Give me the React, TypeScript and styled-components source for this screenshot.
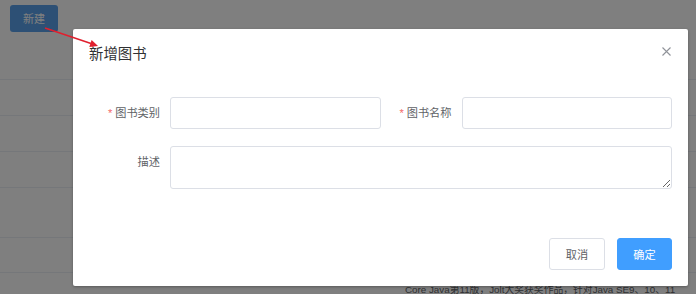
import styled, { createGlobalStyle } from 'styled-components';

const GlobalStyle = createGlobalStyle`
  html, body {
    margin: 0;
    padding: 0;
    background: #fff;
  }
  body {
    font-family: 'Helvetica Neue', Helvetica, 'Noto Sans CJK SC', 'Noto Sans', sans-serif;
    -webkit-font-smoothing: antialiased;
  }
  * {
    box-sizing: border-box;
  }
`;

const Page = styled.div`
  position: relative;
  width: 696px;
  height: 294px;
  overflow: hidden;
  background: #fff;
`;

const Toolbar = styled.div`
  display: flex;
  align-items: center;
  height: 44px;
  padding: 0 10px 8px;
`;

const NewButton = styled.button`
  width: 48px;
  height: 27px;
  border: none;
  border-radius: 3px;
  background: #5aa0ea;
  color: #fff;
  font-family: inherit;
  font-size: 11px;
  padding: 0;
`;

const Table = styled.div`
  display: flex;
  flex-direction: column;
`;

const Row = styled.div<{ $h: number }>`
  display: grid;
  grid-template-columns: 405px 1fr;
  height: ${p => p.$h}px;
  border-bottom: 1px solid #ebeef5;
  align-items: center;
  font-size: 9.8px;
  color: #606266;
`;

const Cell = styled.div`
  white-space: nowrap;
  overflow: hidden;
`;

const Mask = styled.div`
  position: absolute;
  inset: 0;
  background: rgba(0, 0, 0, 0.5);
`;

const Dialog = styled.div`
  position: absolute;
  left: 73px;
  top: 29px;
  width: 615px;
  background: #fff;
  border-radius: 2px;
  box-shadow: 0 1px 3px rgba(0, 0, 0, 0.3);
`;

const Header = styled.div`
  position: relative;
  padding: 16px 16px 8px;
`;

const Title = styled.span`
  font-size: 14.4px;
  line-height: 19.2px;
  color: #303133;
`;

const CloseBtn = styled.button`
  position: absolute;
  top: 16px;
  right: 15px;
  width: 13px;
  height: 13px;
  padding: 0;
  border: none;
  background: transparent;
  display: flex;
  align-items: center;
  justify-content: center;
`;

const Body = styled.div`
  padding: 25px 16px 41px;
  display: flex;
  flex-direction: column;
  gap: 17px;
`;

const FormRow = styled.div`
  display: grid;
  grid-template-columns: 1fr 1fr;
`;

const FormItem = styled.div<{ $full?: boolean }>`
  display: flex;
  align-items: flex-start;
  grid-column: ${p => (p.$full ? '1 / span 2' : 'auto')};
`;

const Label = styled.label`
  flex: 0 0 81px;
  text-align: right;
  padding-right: 10px;
  font-size: 11.2px;
  line-height: 32px;
  color: #606266;
`;

const Star = styled.span`
  color: #f56c6c;
  margin-right: 3px;
`;

const Input = styled.input`
  flex: 1;
  min-width: 0;
  height: 32px;
  border: 1px solid #dcdfe6;
  border-radius: 3px;
  padding: 0 12px;
  font-family: inherit;
  font-size: 11.2px;
  color: #606266;
  outline: none;
  background: #fff;
`;

const TextArea = styled.textarea`
  flex: 1;
  min-width: 0;
  height: 43px;
  border: 1px solid #dcdfe6;
  border-radius: 3px;
  padding: 4px 12px;
  font-family: inherit;
  font-size: 11.2px;
  color: #606266;
  outline: none;
  resize: vertical;
  background: #fff;
  display: block;
`;

const Footer = styled.div`
  display: flex;
  justify-content: flex-end;
  gap: 12px;
  padding: 8px 16px 16px;
`;

const Button = styled.button<{ $primary?: boolean }>`
  height: 32px;
  width: ${p => (p.$primary ? 55 : 56)}px;
  padding: 0;
  border-radius: 3px;
  border: 1px solid ${p => (p.$primary ? '#409eff' : '#dcdfe6')};
  background: ${p => (p.$primary ? '#409eff' : '#fff')};
  color: ${p => (p.$primary ? '#fff' : '#606266')};
  font-family: inherit;
  font-size: 11.2px;
`;

const Arrow = styled.svg`
  position: absolute;
  left: 0;
  top: 0;
  pointer-events: none;
`;

export default function App() {
  const rows = [36, 36, 36, 36, 50, 35];
  return (
    <>
      <GlobalStyle />
      <Page>
        <Toolbar>
          <NewButton>新建</NewButton>
        </Toolbar>
        <Table>
          {rows.map((h, i) => (
            <Row key={i} $h={h}>
              <Cell />
              <Cell />
            </Row>
          ))}
          <Row $h={32}>
            <Cell />
            <Cell>Core Java第11版，Jolt大奖获奖作品，针对Java SE9、10、11</Cell>
          </Row>
        </Table>
        <Mask />
        <Dialog>
          <Header>
            <Title>新增图书</Title>
            <CloseBtn aria-label='close'>
              <svg width={9} height={9} viewBox='0 0 9 9'>
                <path
                  d='M0.5 0.5L8.5 8.5M8.5 0.5L0.5 8.5'
                  stroke='#909399'
                  strokeWidth={1.1}
                />
              </svg>
            </CloseBtn>
          </Header>
          <Body>
            <FormRow>
              <FormItem>
                <Label>
                  <Star>*</Star>图书类别
                </Label>
                <Input />
              </FormItem>
              <FormItem>
                <Label>
                  <Star>*</Star>图书名称
                </Label>
                <Input />
              </FormItem>
            </FormRow>
            <FormRow>
              <FormItem $full>
                <Label>描述</Label>
                <TextArea />
              </FormItem>
            </FormRow>
          </Body>
          <Footer>
            <Button>取消</Button>
            <Button $primary>确定</Button>
          </Footer>
        </Dialog>
        <Arrow width={696} height={294}>
          <line x1={45} y1={28} x2={91} y2={43.6} stroke='#e0202e' strokeWidth={1.6} />
          <polygon points='98,46 89.3,46.9 91.6,39.9' fill='#e0202e' />
        </Arrow>
      </Page>
    </>
  );
}
